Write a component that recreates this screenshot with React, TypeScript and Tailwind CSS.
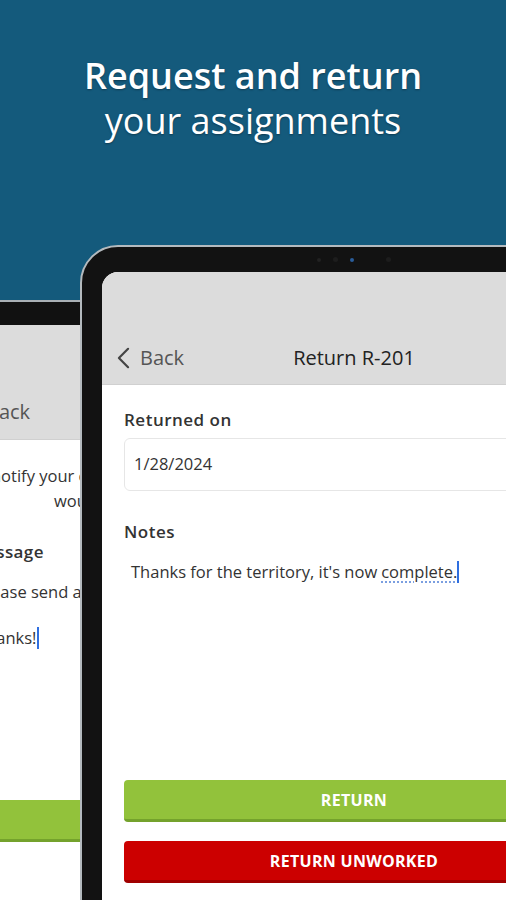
import React from "react";

function Chevron({ className }: { className?: string }) {
  return (
    <svg className={className} viewBox="0 0 14 24" fill="none" stroke="currentColor" strokeWidth="2.4" strokeLinecap="round" strokeLinejoin="round">
      <path d="M12 2 2 12l10 10" />
    </svg>
  );
}

function LeftTablet() {
  return (
    <div className="absolute left-[-76px] top-[300px] h-[700px] w-[300px] rounded-[38px] border-2 border-[#a9b0b5] bg-[#111] px-[22px] pt-[23px]">
      <div className="flex h-full flex-col overflow-hidden rounded-[16px] bg-white text-[#333]">
        <div className="flex h-[115px] shrink-0 items-end border-b border-[#d0d0d0] bg-[#dcdcdc] pb-[12px] pl-[15px]">
          <div className="flex items-center gap-[10px] text-[20px] text-[#555]">
            <Chevron className="h-[22px] w-[13px] text-[#444]" />
            <span>Back</span>
          </div>
        </div>
        <div className="flex flex-col whitespace-nowrap pl-[22px] text-[16.5px]">
          <p className="mt-[23px] leading-[25px]">
            <span className="block pl-[21px]">notify your overseer that you</span>
            <span className="block pl-[84px]">would like a new territory.</span>
          </p>
          <p className="mt-[27px] text-[17px] font-semibold leading-[24px] tracking-[0.4px]">Message</p>
          <div className="mt-[16px] pl-[7px] leading-[24px]">
            <p>Please send a new territory.</p>
            <p className="mt-[22px] flex items-center">
              Thanks!
              <span className="ml-[1px] inline-block h-[22px] w-[2px] bg-[#2f6fe0]" />
            </p>
          </div>
          <div className="mt-[150px] h-[42px] rounded-[4px] border-b-[3px] border-[#74a22c] bg-[#92c23b]" />
        </div>
      </div>
    </div>
  );
}

function RightTablet() {
  return (
    <div className="absolute left-[80px] top-[245px] h-[720px] w-[548px] rounded-[38px] border-2 border-[#b4babe] bg-[#121212] px-[20px] pt-[25px]">
      <div className="absolute left-[235px] top-[10px] flex items-center gap-[12px]">
        <span className="h-[4px] w-[4px] rounded-full bg-[#222]" />
        <span className="h-[5px] w-[5px] rounded-full bg-[#1d1d1d]" />
        <span className="h-[4px] w-[4px] rounded-full bg-[#2a5d9a]" />
        <span className="ml-[20px] h-[5px] w-[5px] rounded-full bg-[#1d1d1d]" />
      </div>
      <div className="flex h-full flex-col overflow-hidden rounded-[16px] bg-white text-[#333]">
        <div className="relative flex h-[113px] shrink-0 items-end border-b border-[#d0d0d0] bg-[#dcdcdc] pb-[11px]">
          <div className="flex items-center gap-[10px] pl-[15px] text-[20px] text-[#555]">
            <Chevron className="h-[22px] w-[13px] text-[#444]" />
            <span>Back</span>
          </div>
          <span className="absolute inset-x-0 bottom-[12px] text-center text-[20px] font-medium leading-[28px] text-[#222]">
            Return R-201
          </span>
        </div>
        <div className="flex flex-col px-[22px]">
          <label className="mt-[24px] text-[17px] font-semibold leading-[22px] tracking-[0.5px]">Returned on</label>
          <div className="mt-[7px] flex h-[53px] items-center rounded-[6px] border border-[#e6e6e6] px-[9px] text-[16.5px]">
            1/28/2024
          </div>
          <label className="mt-[30px] text-[17px] font-semibold leading-[22px] tracking-[0.5px]">Notes</label>
          <p className="mt-[17px] flex items-center pl-[7px] text-[16.5px] leading-[24px]">
            Thanks for the territory, it's now{" "}
            <span className="ml-[4px] underline decoration-[#7b9fe0] decoration-dotted decoration-[1.5px] underline-offset-[3px]">complete.</span>
            <span className="inline-block h-[22px] w-[2px] bg-[#2f6fe0]" />
          </p>
          <button className="mt-[196px] h-[42px] rounded-[4px] border-b-[3px] border-[#74a22c] bg-[#92c23b] text-[16px] font-bold tracking-[0.3px] text-white">
            RETURN
          </button>
          <button className="mt-[19px] h-[42px] rounded-[4px] border-b-[3px] border-[#a00000] bg-[#cc0000] text-[16px] font-bold tracking-[0.3px] text-white">
            RETURN UNWORKED
          </button>
        </div>
      </div>
    </div>
  );
}

export default function App() {
  return (
    <div className="relative h-[900px] w-[506px] overflow-hidden bg-[#145a7c] font-['Open_Sans','Noto_Sans',sans-serif]">
      <div className="flex flex-col items-center pt-[53px] text-white [text-shadow:0_1px_2px_rgba(0,0,0,0.35)]">
        <h1 className="text-[36px] font-semibold leading-[45px]">Request and return</h1>
        <p className="text-[36px] leading-[45px]">your assignments</p>
      </div>
      <LeftTablet />
      <RightTablet />
    </div>
  );
}
